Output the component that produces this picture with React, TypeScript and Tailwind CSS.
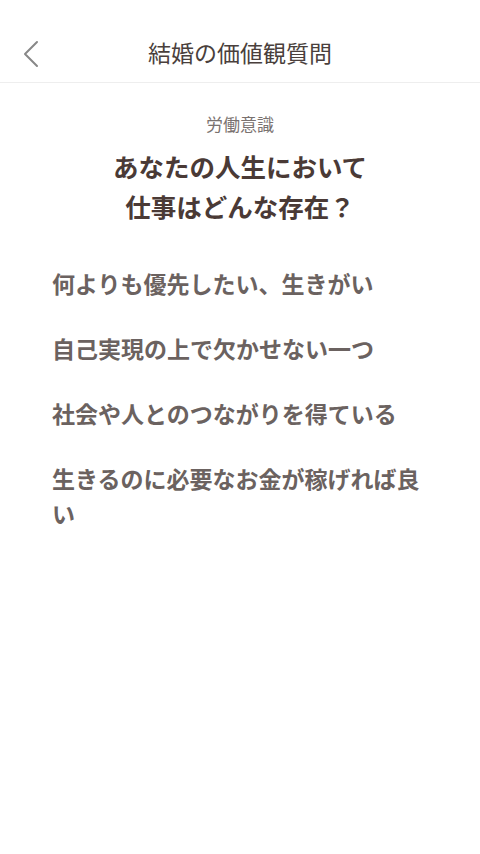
const options = [
  '何よりも優先したい、生きがい',
  '自己実現の上で欠かせない一つ',
  '社会や人とのつながりを得ている',
  '生きるのに必要なお金が稼げれば良い',
];

export default function App() {
  return (
    <div
      className="min-h-[854px] w-[480px] bg-white"
      style={{ fontFamily: '"Noto Sans CJK JP", "Noto Sans", sans-serif' }}
    >
      <header className="relative flex h-[83px] items-end justify-center border-b border-[#eeeeee] pb-[14px]">
        <button className="absolute left-[22px] top-[40px] text-[#888888]">
          <svg width="18" height="28" viewBox="0 0 18 28" fill="none">
            <path d="M15 2 L3 14 L15 26" stroke="currentColor" strokeWidth="2" strokeLinecap="round" strokeLinejoin="round" />
          </svg>
        </button>
        <h1 className="text-[23px] leading-[32px] text-[#4a3f3c]">結婚の価値観質問</h1>
      </header>

      <div className="flex flex-col items-center pt-[29px]">
        <p className="text-[17px] leading-[24px] text-[#7a7270]">労働意識</p>
        <h2 className="mt-[10px] text-center text-[25.5px] font-bold leading-[40px] text-[#4a3a36]">
          あなたの人生において
          <br />
          仕事はどんな存在？
        </h2>
      </div>

      <ul className="mt-[40px] flex flex-col gap-[30px] px-[52px]">
        {options.map((o) => (
          <li key={o} className="text-[23px] font-bold leading-[35px] text-[#6b6260]">
            {o}
          </li>
        ))}
      </ul>
    </div>
  );
}
